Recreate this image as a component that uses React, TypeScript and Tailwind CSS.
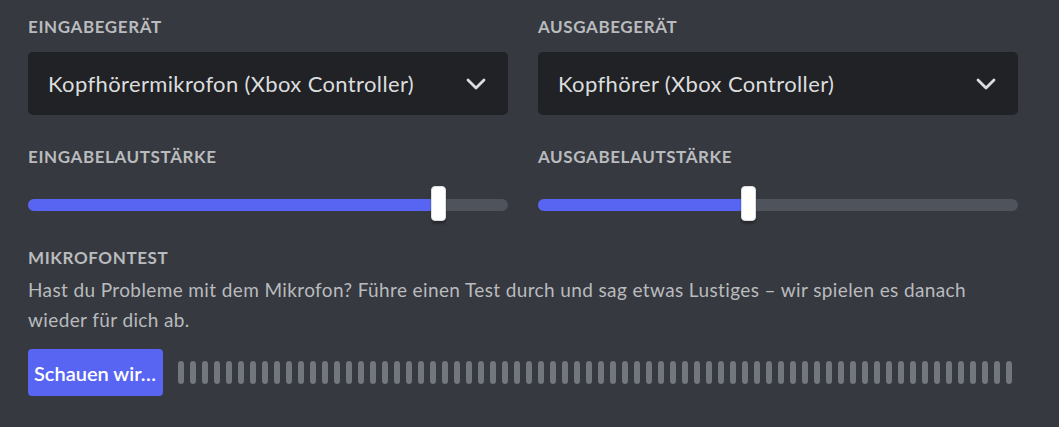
import React from 'react';

const font = { fontFamily: 'Lato, "Noto Sans", "Liberation Sans", sans-serif' };

const Chevron = () => (
  <svg width="20" height="12" viewBox="0 0 20 12" fill="none">
    <path d="M2 2L10 10L18 2" stroke="#dcddde" strokeWidth="2.8" strokeLinecap="round" strokeLinejoin="round" />
  </svg>
);

const Label: React.FC<{ children: React.ReactNode }> = ({ children }) => (
  <div className="text-[17px] leading-[22px] font-bold uppercase tracking-[0.6px] text-[#b9bbbe]">{children}</div>
);

const Select: React.FC<{ value: string }> = ({ value }) => (
  <div className="flex items-center justify-between h-[63px] rounded-[5px] bg-[#202225] pl-[20px] pr-[22px]">
    <span className="text-[22px] tracking-[0.36px] text-[#dcddde]">{value}</span>
    <Chevron />
  </div>
);

const Slider: React.FC<{ value: number }> = ({ value }) => (
  <div className="relative h-[35px]">
    <div className="absolute left-0 right-0 top-[13px] h-[12px] rounded-full bg-[#4f545c]">
      <div className="h-full rounded-full bg-[#5865f2]" style={{ width: `${value}%` }} />
    </div>
    <div
      className="absolute top-0 h-[35px] w-[15px] -ml-[7px] rounded-[4px] bg-white border border-[#dcddde] shadow-[0_3px_2px_rgba(0,0,0,0.25)]"
      style={{ left: `${value}%` }}
    />
  </div>
);

export default function App() {
  const bars = Array.from({ length: 70 });
  return (
    <div className="w-[1059px] h-[427px] bg-[#36393f] pl-[28px] pt-[16px] overflow-hidden" style={font}>
      <div className="w-[990px]">
        <div className="grid grid-cols-2 gap-x-[30px]">
          <div>
            <Label>Eingabegerät</Label>
            <div className="mt-[14px]">
              <Select value="Kopfhörermikrofon (Xbox Controller)" />
            </div>
          </div>
          <div>
            <Label>Ausgabegerät</Label>
            <div className="mt-[14px]">
              <Select value="Kopfhörer (Xbox Controller)" />
            </div>
          </div>
        </div>

        <div className="grid grid-cols-2 gap-x-[30px] mt-[31px]">
          <div>
            <Label>Eingabelautstärke</Label>
            <div className="mt-[18px]">
              <Slider value={85.4} />
            </div>
          </div>
          <div>
            <Label>Ausgabelautstärke</Label>
            <div className="mt-[18px]">
              <Slider value={43.8} />
            </div>
          </div>
        </div>

        <div className="mt-[26px]">
          <Label>Mikrofontest</Label>
          <p className="mt-[6px] text-[19px] leading-[30px] tracking-[0.38px] text-[#b9bbbe]">
            Hast du Probleme mit dem Mikrofon? Führe einen Test durch und sag etwas Lustiges – wir spielen es danach wieder für dich ab.
          </p>
          <div className="flex items-center mt-[14px]">
            <button className="w-[135px] h-[47px] rounded-[4px] bg-[#5865f2] text-white text-[20px] font-semibold px-[6px] text-left whitespace-nowrap overflow-hidden">
              Schauen wir…
            </button>
            <div className="flex items-center gap-[6px] ml-[15px]">
              {bars.map((_, i) => (
                <div key={i} className="w-[6px] h-[23px] rounded-full bg-[#72767d]" />
              ))}
            </div>
          </div>
        </div>
      </div>
    </div>
  );
}
